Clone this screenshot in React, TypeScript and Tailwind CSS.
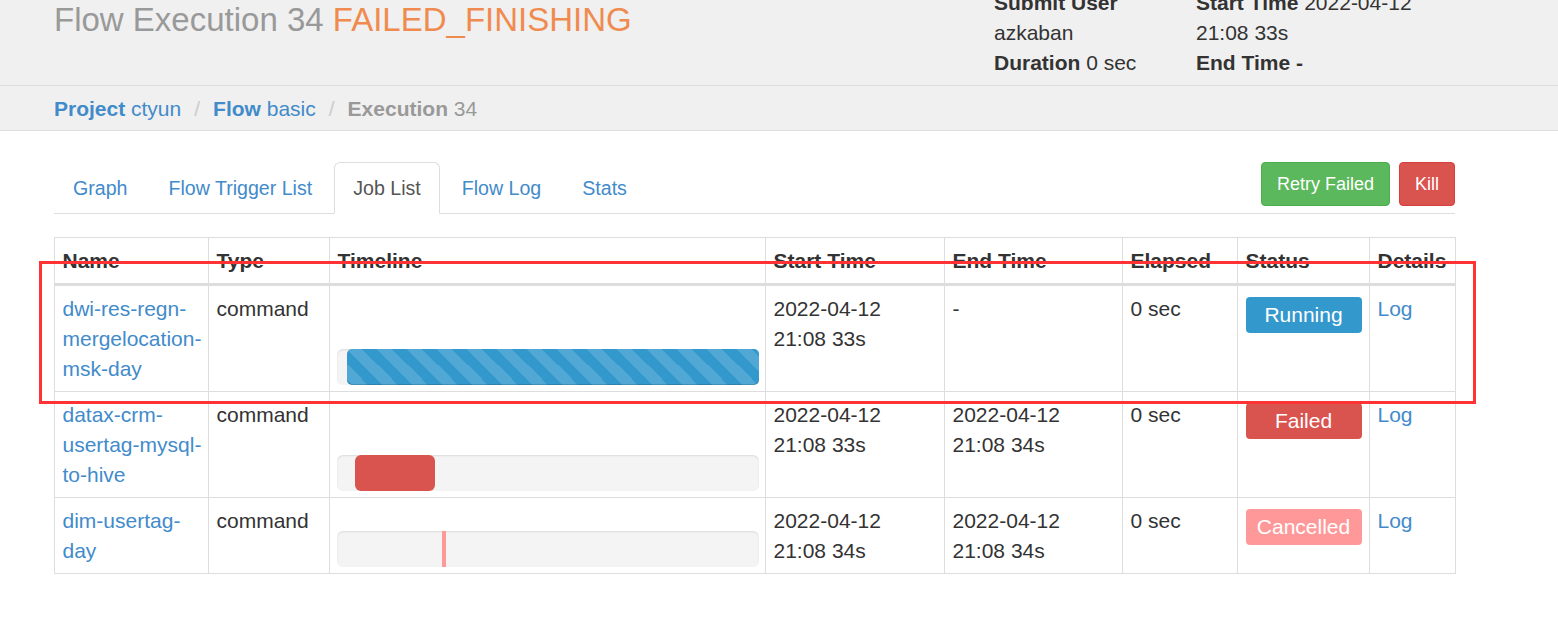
import React from "react";

// one row of the job list
interface Job {
  name: string;
  start: string;
  end: string;
  elapsed: string;
  status: "Running" | "Failed" | "Cancelled";
  offset: number; // % of the timeline
  width: number; // % of the timeline
}

const jobs: Job[] = [
  {
    name: "dwi-res-regn-mergelocation-msk-day",
    start: "2022-04-12 21:08 33s",
    end: "-",
    elapsed: "0 sec",
    status: "Running",
    offset: 2.37,
    width: 97.63,
  },
  {
    name: "datax-crm-usertag-mysql-to-hive",
    start: "2022-04-12 21:08 33s",
    end: "2022-04-12 21:08 34s",
    elapsed: "0 sec",
    status: "Failed",
    offset: 4.27,
    width: 18.96,
  },
  {
    name: "dim-usertag-day",
    start: "2022-04-12 21:08 34s",
    end: "2022-04-12 21:08 34s",
    elapsed: "0 sec",
    status: "Cancelled",
    offset: 24.9,
    width: 0.95,
  },
];

const labelClass: Record<Job["status"], string> = {
  Running: "bg-[#3399cc]",
  Failed: "bg-[#d9534f]",
  Cancelled: "bg-[#ff9999]",
};

const barClass: Record<Job["status"], string> = {
  Running:
    "rounded-[5px] bg-[#3399cc] shadow-[inset_0_-1px_0_rgba(0,0,0,0.15)] [background-image:linear-gradient(45deg,rgba(255,255,255,.15)_25%,transparent_25%,transparent_50%,rgba(255,255,255,.15)_50%,rgba(255,255,255,.15)_75%,transparent_75%,transparent)] [background-size:30px_30px]",
  Failed: "rounded-[6px] bg-[#d9534f]",
  Cancelled: "bg-[#ff9999]",
};

const tabs = ["Graph", "Flow Trigger List", "Job List", "Flow Log", "Stats"];

const columns = [
  { title: "Name", width: "w-[154px]" },
  { title: "Type", width: "w-[121px]" },
  { title: "Timeline", width: "w-[436px]" },
  { title: "Start Time", width: "w-[179px]" },
  { title: "End Time", width: "w-[178px]" },
  { title: "Elapsed", width: "w-[115px]" },
  { title: "Status", width: "w-[132px]" },
  { title: "Details", width: "w-[86px]" },
];

export default function App() {
  return (
    <div className="relative min-h-[623px] bg-white font-['Liberation_Sans',Arial,sans-serif] text-[21px] leading-[30px] text-[#333]">
      {/* page header, scrolled a little */}
      <div className="h-[86px] overflow-hidden border-b border-[#dedede] bg-[#f0f0f0]">
        <div className="ml-[54px] flex w-[1401px]">
          <h1 className="mt-[2px] flex-1 text-[33px] font-normal leading-[36px] text-[#999]">
            Flow Execution 34 <span className="text-[#f08b50]">FAILED_FINISHING</span>
          </h1>
          <div className="-mt-[12px] w-[202px]">
            <div>
              <strong>Submit User</strong> azkaban
            </div>
            <div>
              <strong>Duration</strong> 0 sec
            </div>
          </div>
          <div className="-mt-[12px] w-[259px]">
            <div>
              <strong>Start Time</strong> 2022-04-12 21:08 33s
            </div>
            <div>
              <strong>End Time -</strong>
            </div>
          </div>
        </div>
      </div>

      {/* breadcrumb */}
      <div className="flex h-[45px] items-center border-b border-[#dedede] bg-[#f0f0f0] pt-[2px]">
        <div className="ml-[54px] flex">
          <a className="text-[#428bca]">
            <strong>Project</strong> ctyun
          </a>
          <span className="mx-[13px] text-[#ccc]">/</span>
          <a className="text-[#428bca]">
            <strong>Flow</strong> basic
          </a>
          <span className="mx-[13px] text-[#ccc]">/</span>
          <span className="text-[#999]">
            <strong>Execution</strong> 34
          </span>
        </div>
      </div>

      <div className="ml-[54px] w-[1401px]">
        {/* tabs + actions */}
        <div className="mt-[31px] flex border-b border-[#ddd] text-[19.6px]">
          {tabs.map((t) =>
            t === "Job List" ? (
              <a
                key={t}
                className="-mb-px mr-[3px] rounded-t-[6px] border border-[#ddd] border-b-transparent bg-white px-[18px] py-[10px] text-[#555]"
              >
                {t}
              </a>
            ) : (
              <a
                key={t}
                className="-mb-px mr-[3px] rounded-t-[6px] border border-transparent px-[18px] py-[10px] text-[#428bca]"
              >
                {t}
              </a>
            )
          )}
          <div className="ml-auto flex gap-[9px] self-start">
            <button className="rounded-[4px] border border-[#4cae4c] bg-[#5cb85c] px-[15px] py-[7.5px] text-[18px] leading-[27px] text-white">
              Retry Failed
            </button>
            <button className="rounded-[4px] border border-[#d43f3a] bg-[#d9534f] px-[15px] py-[7.5px] text-[18px] leading-[27px] text-white">
              Kill
            </button>
          </div>
        </div>

        {/* job list */}
        <table className="mt-[23px] w-[1401px] table-fixed border-collapse">
          <colgroup>
            {columns.map((c) => (
              <col key={c.title} className={c.width} />
            ))}
          </colgroup>
          <thead>
            <tr>
              {columns.map((c) => (
                <th
                  key={c.title}
                  className="border border-b-[3px] border-[#ddd] p-[7.5px] text-left align-bottom font-bold"
                >
                  {c.title}
                </th>
              ))}
            </tr>
          </thead>
          <tbody>
            {jobs.map((job) => (
              <tr key={job.name}>
                <td className="border border-[#ddd] py-[7.5px] pl-[7.5px] pr-[4px] align-top text-[#428bca]">
                  {job.name}
                </td>
                <td className="border border-[#ddd] p-[7.5px] align-top">command</td>
                <td className="border border-[#ddd] pb-[6px] pl-[7px] pr-[7.5px] pt-[7.5px] align-bottom">
                  <div className="flex h-[36px] w-[422px] rounded-[6px] bg-[#f4f4f4] shadow-[inset_0_1px_2px_rgba(0,0,0,0.1)]">
                    <div
                      className={barClass[job.status]}
                      style={{ marginLeft: `${job.offset}%`, width: `${job.width}%` }}
                    />
                  </div>
                </td>
                <td className="border border-[#ddd] p-[7.5px] align-top">{job.start}</td>
                <td className="border border-[#ddd] p-[7.5px] align-top">{job.end}</td>
                <td className="border border-[#ddd] p-[7.5px] align-top">{job.elapsed}</td>
                <td className="border border-[#ddd] p-[7.5px] align-top">
                  <div
                    className={`mt-[3.5px] h-[36px] w-[116px] rounded-[4px] text-center leading-[36px] text-white ${labelClass[job.status]}`}
                  >
                    {job.status}
                  </div>
                </td>
                <td className="border border-[#ddd] p-[7.5px] align-top text-[#428bca]">Log</td>
              </tr>
            ))}
          </tbody>
        </table>
      </div>

      {/* annotation box over the running row */}
      <div className="pointer-events-none absolute left-[39px] top-[261px] h-[143px] w-[1437px] border-[3px] border-[#ff3333]" />
    </div>
  );
}
